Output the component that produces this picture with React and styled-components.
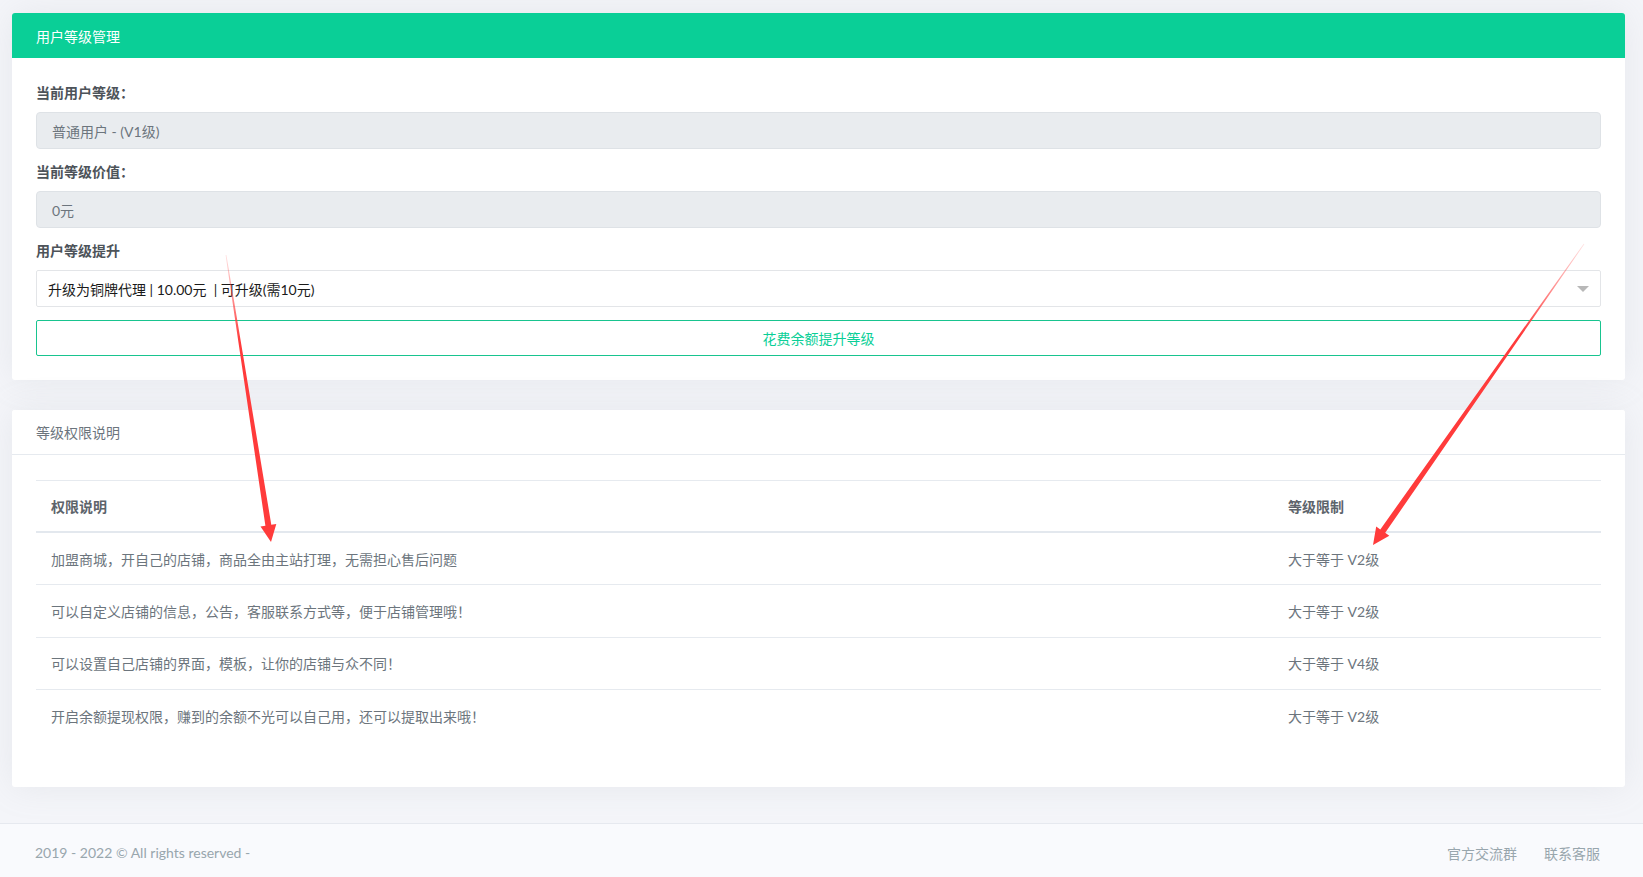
import React from 'react'
import styled, { createGlobalStyle } from 'styled-components'

const GlobalStyle = createGlobalStyle`
  html, body {
    margin: 0;
    padding: 0;
    background: #f4f5f9;
    font-family: Lato, "Noto Sans CJK SC", sans-serif;
    font-size: 14px;
    color: #6c757d;
  }
`

const levelRules = [
  { text: '加盟商城，开自己的店铺，商品全由主站打理，无需担心售后问题', limit: '大于等于 V2级' },
  { text: '可以自定义店铺的信息，公告，客服联系方式等，便于店铺管理哦！', limit: '大于等于 V2级' },
  { text: '可以设置自己店铺的界面，模板，让你的店铺与众不同！', limit: '大于等于 V4级' },
  { text: '开启余额提现权限，赚到的余额不光可以自己用，还可以提取出来哦！', limit: '大于等于 V2级' },
]

const arrows = [
  { id: 'a1', x1: 226, y1: 255, x2: 271, y2: 542 },
  { id: 'a2', x1: 1584, y1: 244, x2: 1373, y2: 545 },
]

// tapered arrow polygon: thin tail, thicker shaft, triangular head
function arrowPoints(x1, y1, x2, y2, w0, w1, headLen, headHalf) {
  const dx = x2 - x1
  const dy = y2 - y1
  const len = Math.hypot(dx, dy)
  const ux = dx / len
  const uy = dy / len
  const nx = -uy
  const ny = ux
  const bx = x2 - ux * headLen
  const by = y2 - uy * headLen
  const p = [
    [x1 + (nx * w0) / 2, y1 + (ny * w0) / 2],
    [bx + (nx * w1) / 2, by + (ny * w1) / 2],
    [bx + nx * headHalf, by + ny * headHalf],
    [x2, y2],
    [bx - nx * headHalf, by - ny * headHalf],
    [bx - (nx * w1) / 2, by - (ny * w1) / 2],
    [x1 - (nx * w0) / 2, y1 - (ny * w0) / 2],
  ]
  return p.map((q) => q.map((v) => v.toFixed(1)).join(',')).join(' ')
}

export default function App() {
  return (
    <Page>
      <GlobalStyle />
      <Content>
        <Card>
          <CardHeader $accent>用户等级管理</CardHeader>
          <CardBody>
            <FormGroup>
              <Label>当前用户等级：</Label>
              <ReadonlyField>普通用户 - (V1级)</ReadonlyField>
            </FormGroup>
            <FormGroup>
              <Label>当前等级价值：</Label>
              <ReadonlyField>0元</ReadonlyField>
            </FormGroup>
            <FormGroup>
              <Label>用户等级提升</Label>
              <SelectBox>
                <span>升级为铜牌代理 | 10.00元&nbsp; | 可升级(需10元)</span>
                <Caret />
              </SelectBox>
            </FormGroup>
            <OutlineButton>花费余额提升等级</OutlineButton>
          </CardBody>
        </Card>

        <Card>
          <CardHeader>等级权限说明</CardHeader>
          <TableBody>
            <Table>
              <HeadRow>
                <Cell $head>权限说明</Cell>
                <Cell $head>等级限制</Cell>
              </HeadRow>
              {levelRules.map((r, i) => (
                <Row key={i} $last={i === levelRules.length - 1}>
                  <Cell>{r.text}</Cell>
                  <Cell>{r.limit}</Cell>
                </Row>
              ))}
            </Table>
          </TableBody>
        </Card>
      </Content>

      <Footer>
        <span>2019 - 2022 © All rights reserved -</span>
        <FooterLinks>
          <span>官方交流群</span>
          <span>联系客服</span>
        </FooterLinks>
      </Footer>

      <Overlay width="1643" height="877" viewBox="0 0 1643 877">
        <defs>
          {arrows.map((a) => (
            <linearGradient
              key={a.id}
              id={a.id}
              gradientUnits="userSpaceOnUse"
              x1={a.x1}
              y1={a.y1}
              x2={a.x1 + (a.x2 - a.x1) * 0.3}
              y2={a.y1 + (a.y2 - a.y1) * 0.3}
            >
              <stop offset="0" stopColor="#ff3b3b" stopOpacity="0.15" />
              <stop offset="1" stopColor="#ff3b3b" stopOpacity="1" />
            </linearGradient>
          ))}
        </defs>
        {arrows.map((a) => (
          <polygon
            key={a.id}
            points={arrowPoints(a.x1, a.y1, a.x2, a.y2, 0.8, 6, 17, 8)}
            fill={`url(#${a.id})`}
          />
        ))}
      </Overlay>
    </Page>
  )
}

const Page = styled.div`
  position: relative;
  min-height: 877px;
  display: flex;
  flex-direction: column;
`

const Content = styled.div`
  padding: 13px 18px 35px 12px;
  display: flex;
  flex-direction: column;
  gap: 30px;
`

const Card = styled.div`
  background: #fff;
  border-radius: 3px;
  box-shadow: 0 0 35px 0 rgba(154, 161, 171, 0.15);
  overflow: hidden;
`

const CardHeader = styled.div`
  height: 45px;
  box-sizing: border-box;
  padding: 0 24px;
  display: flex;
  align-items: center;
  background: ${(p) => (p.$accent ? '#0acf97' : '#fff')};
  color: ${(p) => (p.$accent ? '#fff' : '#6c757d')};
  border-bottom: ${(p) => (p.$accent ? 'none' : '1px solid #e6eaef')};
  font-weight: 400;
`

const CardBody = styled.div`
  padding: 25px 24px 24px 24px;
`

const FormGroup = styled.div`
  margin-bottom: 13px;
`

const Label = styled.div`
  line-height: 20px;
  margin-bottom: 9px;
  font-weight: 700;
  color: #4d5359;
`

const ReadonlyField = styled.div`
  height: 37px;
  box-sizing: border-box;
  padding: 0 15px;
  display: flex;
  align-items: center;
  background: #e9ecef;
  border: 1px solid #dee2e6;
  border-radius: 4px;
  color: #6c757d;
`

const SelectBox = styled.div`
  height: 37px;
  box-sizing: border-box;
  padding: 0 11px;
  display: flex;
  align-items: center;
  justify-content: space-between;
  background: #fff;
  border: 1px solid #e3e5e8;
  border-radius: 2px;
  color: #1a1a1a;
`

const Caret = styled.span`
  width: 0;
  height: 0;
  border-left: 6px solid transparent;
  border-right: 6px solid transparent;
  border-top: 6px solid #b8b8b8;
`

const OutlineButton = styled.button`
  width: 100%;
  height: 36px;
  display: block;
  background: #fff;
  border: 1px solid #18c48f;
  border-radius: 2px;
  color: #0acf97;
  font-family: inherit;
  font-size: 14px;
  cursor: pointer;
`

const TableBody = styled.div`
  padding: 25px 24px 45px 24px;
`

const Table = styled.div`
  display: flex;
  flex-direction: column;
  border-top: 1px solid #e6eaef;
`

const HeadRow = styled.div`
  display: grid;
  grid-template-columns: 1fr 328px;
  height: 50px;
  border-bottom: 2px solid #e3e8ee;
`

const Row = styled.div`
  display: grid;
  grid-template-columns: 1fr 328px;
  height: 51.4px;
  border-bottom: ${(p) => (p.$last ? 'none' : '1px solid #e6eaef')};
`

const Cell = styled.div`
  display: flex;
  align-items: center;
  padding: 0 15px;
  font-weight: ${(p) => (p.$head ? 700 : 400)};
  color: ${(p) => (p.$head ? '#5d646b' : '#6c757d')};
`

const Footer = styled.footer`
  margin-top: auto;
  height: 54px;
  box-sizing: border-box;
  padding: 4px 43px 0 35px;
  display: flex;
  align-items: center;
  justify-content: space-between;
  background: #f9fafd;
  border-top: 1px solid #e6e9ef;
  color: #98a6ad;
  font-size: 14px;
`

const FooterLinks = styled.div`
  display: flex;
  gap: 27px;
`

const Overlay = styled.svg`
  position: absolute;
  top: 0;
  left: 0;
  pointer-events: none;
`
